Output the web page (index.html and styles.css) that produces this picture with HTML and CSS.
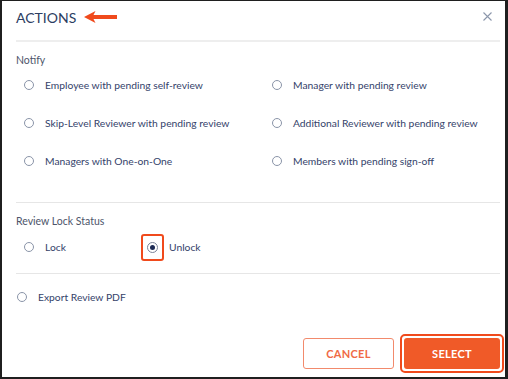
FILE: index.html
```html
<!DOCTYPE html>
<html>
<head>
<meta charset="utf-8">
<link rel="stylesheet" href="styles.css">
</head>
<body>
<div class="modal">
  <div class="header">
    <div class="title-wrap">
      <h1 class="title">ACTIONS</h1>
      <svg class="arrow" width="34" height="12" viewBox="0 0 34 12"><path d="M0 6 L11.5 0 L9.5 4 L33 4 L33 8 L9.5 8 L11.5 12 Z" fill="#f04a1c"/></svg>
    </div>
    <svg class="close" width="9" height="9" viewBox="0 0 9 9"><path d="M0.5 0.5 L8.5 8.5 M8.5 0.5 L0.5 8.5" stroke="#8c97ab" stroke-width="1.1"/></svg>
  </div>
  <div class="section">
    <div class="label">Notify</div>
    <div class="grid">
      <div class="opt"><span class="radio"></span>Employee with pending self-review</div>
      <div class="opt"><span class="radio"></span>Manager with pending review</div>
      <div class="opt"><span class="radio"></span>Skip-Level Reviewer with pending review</div>
      <div class="opt"><span class="radio"></span>Additional Reviewer with pending review</div>
      <div class="opt"><span class="radio"></span>Managers with One-on-One</div>
      <div class="opt"><span class="radio"></span>Members with pending sign-off</div>
    </div>
  </div>
  <div class="section lock">
    <div class="label">Review Lock Status</div>
    <div class="lock-row">
      <div class="opt lock-opt"><span class="radio"></span>Lock</div>
      <div class="opt lock-opt"><span class="hl"><span class="radio checked"></span></span>Unlock</div>
    </div>
  </div>
  <div class="export">
    <div class="opt"><span class="radio"></span>Export Review PDF</div>
  </div>
  <div class="footer">
    <button class="btn cancel">CANCEL</button>
    <span class="btn-hl"><button class="btn select">SELECT</button></span>
  </div>
</div>
</body>
</html>
```
FILE: styles.css
```css
* { box-sizing: border-box; }
html, body { margin: 0; padding: 0; background: #fff; }
body { width: 508px; height: 379px; overflow: hidden; font-family: Lato, "Open Sans", sans-serif; }
.modal {
  width: 508px; height: 379px;
  border: 2px solid #1f1f1f; border-top-width: 1px; border-right-width: 3px;
  display: flex; flex-direction: column;
  padding: 0 5px 0 14px;
}
.header {
  height: 41px; display: flex; align-items: center; justify-content: space-between;
  border-bottom: 2px solid #eeeeee; padding-bottom: 7px;
}
.title-wrap { display: flex; align-items: center; gap: 8px; }
.title { margin: 0; font-size: 14px; font-weight: 400; color: #2c3d62; }
.close { margin-right: 8px; margin-top: -1px; }
.label { font-size: 10.5px; line-height: 13px; color: #4d556a; padding-top: 12px; }
.section { border-bottom: 1px solid #e6e6e6; }
.opt { display: flex; align-items: center; font-size: 10.3px; color: #34426a; height: 38px; white-space: nowrap; }
.grid { display: grid; grid-template-columns: 248px 1fr; padding: 0 0 22px 8px; margin-top: -1px; }
.radio {
  width: 10px; height: 10px; border-radius: 50%; border: 1px solid #8a94a8;
  display: inline-block; margin-right: 11px; flex: none; position: relative; background: #fff;
}
.radio.checked { width: 11px; height: 11px; border-color: #7a8398; }
.radio.checked::after {
  content: ""; position: absolute; left: 2px; top: 2px; width: 5px; height: 5px;
  border-radius: 50%; background: #1d2b55;
}
.lock-row { display: flex; padding: 0 0 7px 8px; }
.lock-opt:first-child { width: 117px; }
.hl {
  display: inline-flex; align-items: center; justify-content: center;
  width: 23px; height: 27px; border: 2px solid #f04a1c; border-radius: 3px;
  margin-right: 5px;
}
.hl .radio { margin-right: 0; }
.export { padding: 15px 0 0 1px; }
.export .opt { height: 16px; }
.footer { margin-top: auto; display: flex; justify-content: flex-end; align-items: center; gap: 6px; padding-bottom: 4px; margin-right: -4px; }
.btn {
  font-family: Lato, "Open Sans", sans-serif; font-weight: 700; font-size: 11px; letter-spacing: 0.3px;
  height: 31px; border-radius: 3px; cursor: pointer;
}
.cancel { width: 91px; background: #fff; color: #f06a45; border: 1px solid #f28a6c; }
.btn-hl { display: inline-flex; padding: 2px; border: 2px solid #f04a1c; border-radius: 5px; }
.select { width: 96px; background: #f05a28; color: #fff; border: none; }
```
